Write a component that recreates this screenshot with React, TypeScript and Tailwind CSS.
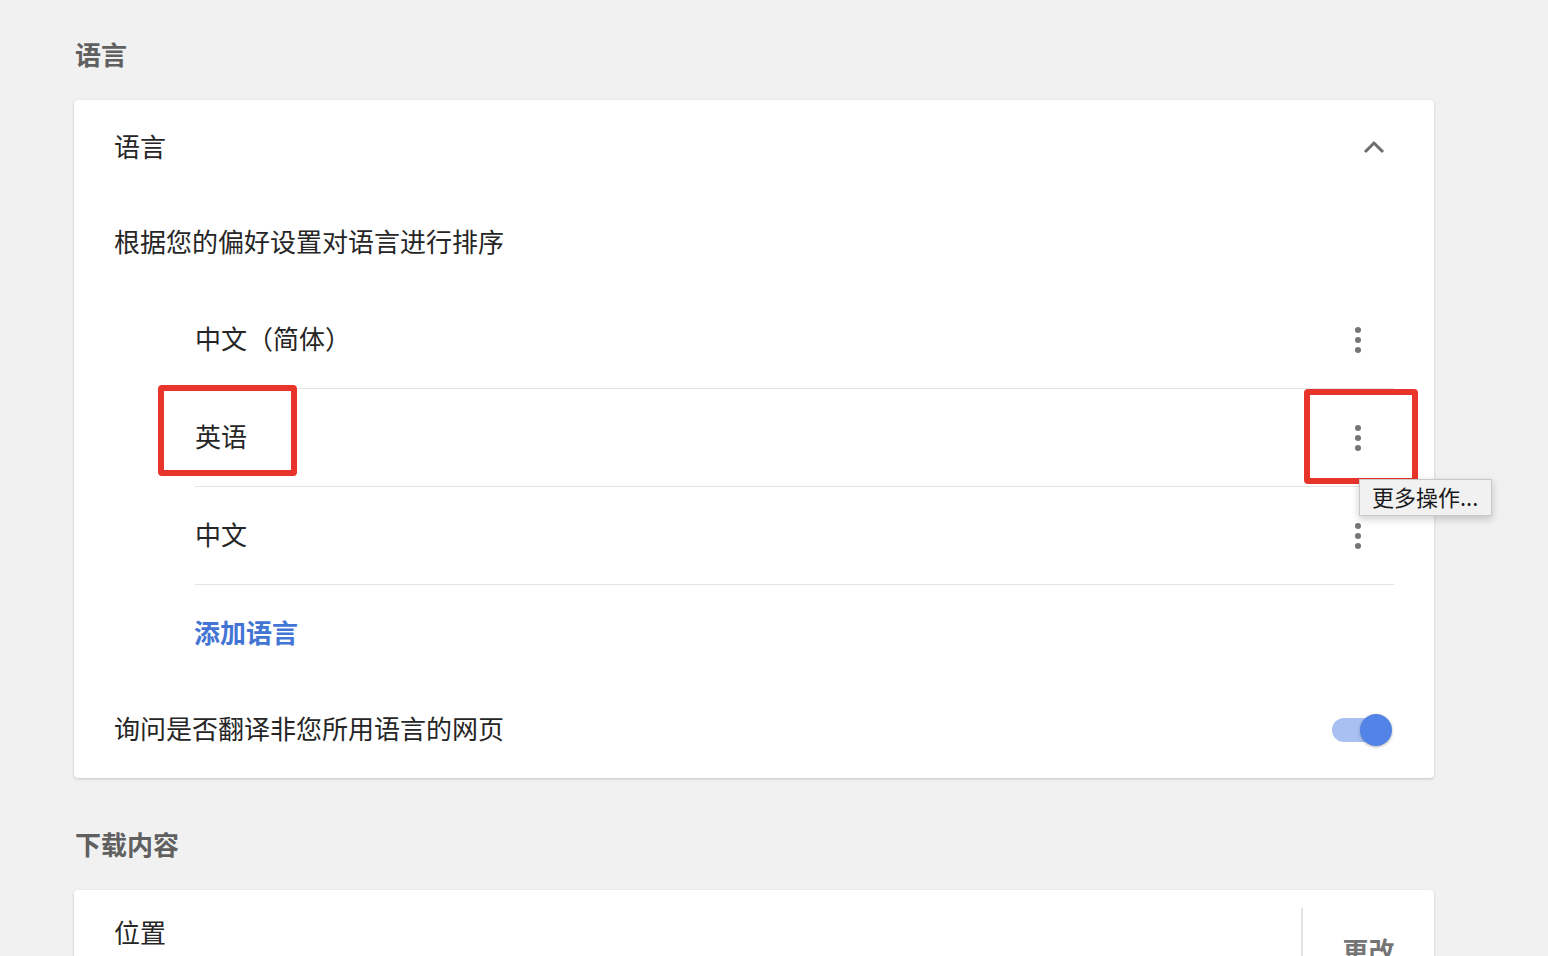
import React from 'react';

const font = { fontFamily: '"Noto Sans CJK SC", "Noto Sans", sans-serif' };

const Dots = () => (
  <div className="flex h-[48px] w-[48px] flex-col items-center justify-center gap-[4px]">
    <span className="h-[6px] w-[6px] rounded-full bg-[#757575]" />
    <span className="h-[6px] w-[6px] rounded-full bg-[#757575]" />
    <span className="h-[6px] w-[6px] rounded-full bg-[#757575]" />
  </div>
);

const languages = ['中文（简体）', '英语', '中文'];

export default function App() {
  return (
    <div style={font} className="h-screen overflow-hidden bg-[#f1f1f1] pl-[74px] text-[26px] text-[#262626]">
      <div className="w-[1360px]">
        {/* 标题 */}
        <div className="flex h-[100px] items-center pl-[1px] pt-[6px] font-semibold text-[#606060]">语言</div>

        <div className="relative rounded-[4px] bg-white shadow-[0_1px_3px_rgba(0,0,0,0.18)]">
          <div className="flex h-[94px] items-center justify-between pl-[40px] pr-[49px]">
            <span className="mb-[4px]">语言</span>
            <svg width="22" height="14" viewBox="0 0 22 14" fill="none">
              <path d="M2 12 L11 3 L20 12" stroke="#6e6e6e" strokeWidth="3" />
            </svg>
          </div>
          <div className="flex h-[97px] items-center pb-[4px] pl-[40px]">根据您的偏好设置对语言进行排序</div>

          <div className="ml-[121px] mr-[40px]">
            {languages.map((l) => (
              <div key={l} className="flex h-[98px] items-center justify-between border-b border-[#e4e4e4] pr-[12px]">
                <span className="mb-[4px]">{l}</span>
                <Dots />
              </div>
            ))}
          </div>

          <div className="flex h-[96px] items-center pb-[4px] pl-[120px] font-semibold text-[#4375d4]">添加语言</div>

          <div className="flex h-[97px] items-center justify-between pl-[40px] pr-[44px]">
            <span className="mb-[4px]">询问是否翻译非您所用语言的网页</span>
            <div className="flex h-[24px] w-[58px] items-center justify-end rounded-full bg-[#a9c1f2]">
              <span className="-mr-[2px] h-[32px] w-[32px] shrink-0 rounded-full bg-[#5283e6] shadow-[0_1px_3px_rgba(0,0,0,0.3)]" />
            </div>
          </div>

          {/* 标注框与提示 */}
          <div className="absolute left-[84px] top-[285px] h-[91px] w-[139px] rounded-[4px] border-[6px] border-[#e8342a]" />
          <div className="absolute left-[1230px] top-[289px] h-[95px] w-[114px] rounded-[4px] border-[6px] border-[#e8342a]" />
          <div className="absolute left-[1285px] top-[379px] flex h-[37px] w-[133px] items-center border border-[#c8c8c8] bg-[#f1f1f1] pb-[3px] pl-[12px] text-[22px] text-[#1a1a1a] shadow-[0_3px_8px_rgba(0,0,0,0.2)]">
            更多操作...
          </div>
        </div>

        <div className="flex h-[112px] items-center pl-[1px] pt-[18px] font-semibold text-[#606060]">下载内容</div>

        <div className="rounded-[4px] bg-white shadow-[0_1px_3px_rgba(0,0,0,0.18)]">
          <div className="flex h-[120px]">
            <div className="flex-1 pl-[40px] pt-[22px]">位置</div>
            <div className="mt-[18px] flex w-[133px] justify-center border-l-2 border-[#e4e4e4] pt-[22px] font-semibold text-[#757575]">
              更改
            </div>
          </div>
        </div>
      </div>
    </div>
  );
}
